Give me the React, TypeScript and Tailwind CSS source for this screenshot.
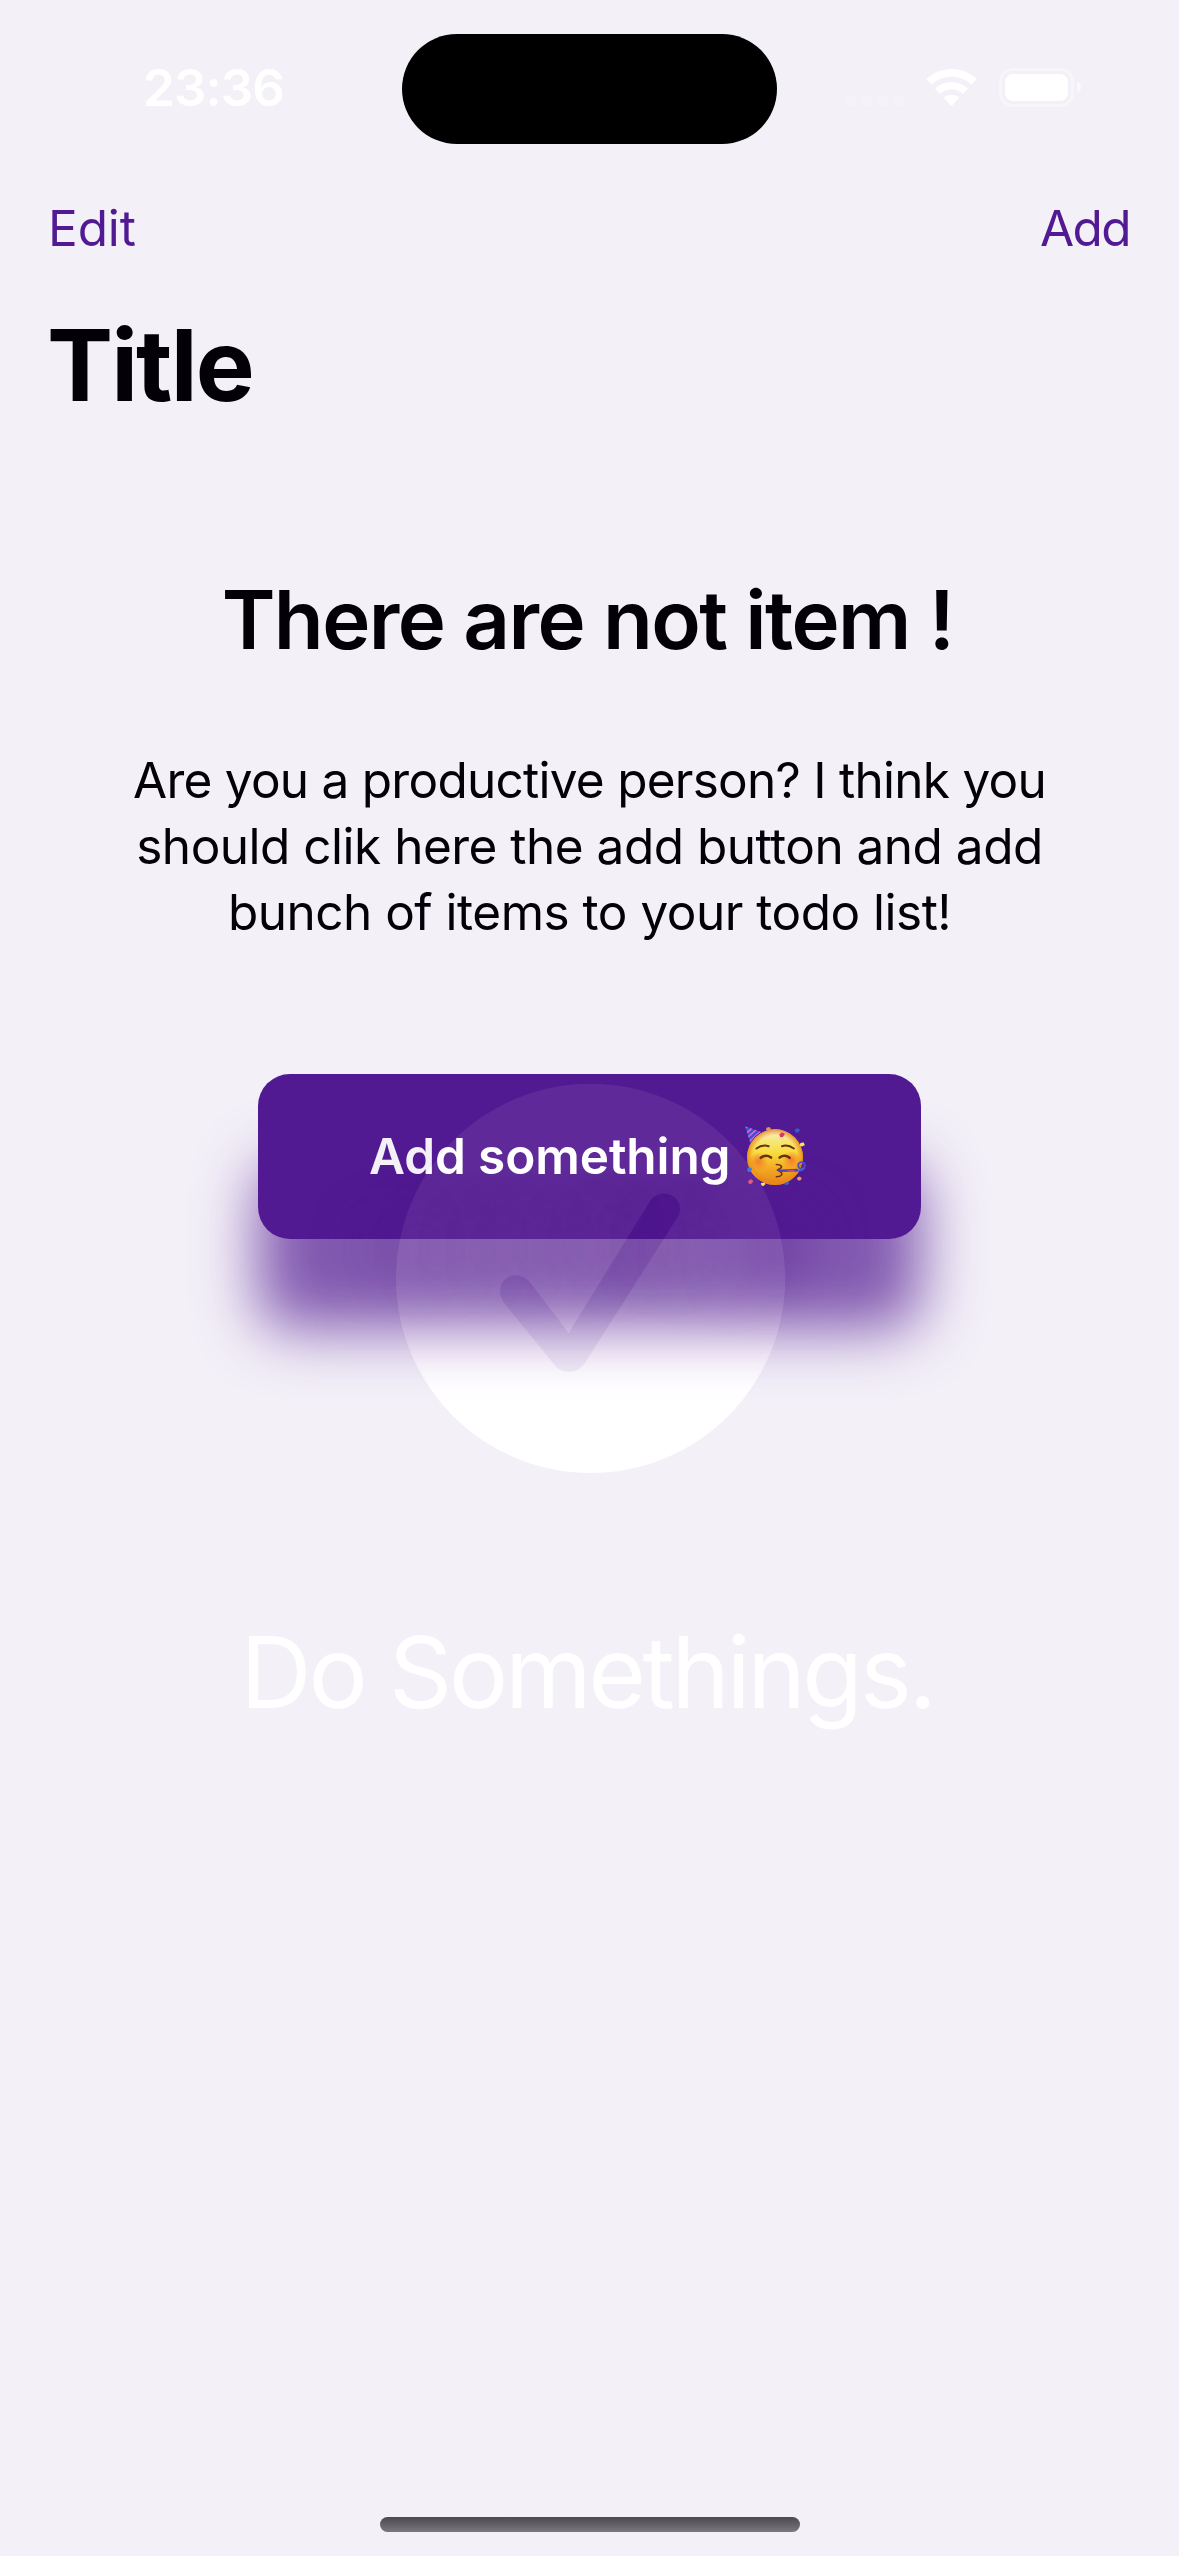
import React from "react";

function PartyFace() {
  return (
    <svg viewBox="75 74 192 190" className="h-[63px] w-16 shrink-0 drop-shadow-[0_90px_30px_rgba(82,26,146,0.7)]">
      <defs>
        <linearGradient id="face" x1="0" y1="0" x2="0" y2="1">
          <stop offset="0" stopColor="#f8efd9" />
          <stop offset="0.2" stopColor="#f7e77c" />
          <stop offset="0.42" stopColor="#f8dc3e" />
          <stop offset="0.68" stopColor="#f4ac26" />
          <stop offset="1" stopColor="#e5841a" />
        </linearGradient>
        <radialGradient id="rim">
          <stop offset="0.78" stopColor="#e98716" stopOpacity="0" />
          <stop offset="1" stopColor="#e98716" stopOpacity="0.85" />
        </radialGradient>
        <radialGradient id="cheek">
          <stop offset="0" stopColor="#f4722a" stopOpacity="0.85" />
          <stop offset="1" stopColor="#f4722a" stopOpacity="0" />
        </radialGradient>
        <clipPath id="hat">
          <path d="M78 78 L126 95 Q103 107 94 130 Z" />
        </clipPath>
      </defs>
      <circle cx="168" cy="171" r="84" fill="url(#face)" />
      <circle cx="168" cy="171" r="84" fill="url(#rim)" />
      <circle cx="118" cy="184" r="28" fill="url(#cheek)" />
      <circle cx="218" cy="180" r="28" fill="url(#cheek)" />
      <g clipPath="url(#hat)">
        <rect x="74" y="74" width="56" height="60" fill="#2f58d0" />
        <g stroke="#e35fd6" strokeWidth="5">
          <path d="M74 86 L90 74" />
          <path d="M80 101 L104 78" />
          <path d="M84 113 L116 84" />
          <path d="M87 127 L128 90" />
        </g>
      </g>
      <g fill="none" stroke="#66330a" strokeWidth="6" strokeLinecap="round">
        <path d="M112 145 Q129 132 149 138" />
        <path d="M189 138 Q207 132 225 145" />
        <path d="M125 173 Q140 161 156 172" strokeWidth="8" />
        <path d="M182 172 Q198 161 212 173" strokeWidth="8" />
        <path d="M172 193 C187 193 193 201 182 206 L176 210 L184 215 C194 222 187 230 172 230" strokeWidth="4.5" />
      </g>
      <path d="M175 209 L236 206 L238 214 L180 216 Z" fill="#4e43b4" />
      <path d="M205 212 L226 211" stroke="#d0568c" strokeWidth="3" />
      <circle cx="248" cy="196" r="10" fill="none" stroke="#4a50c0" strokeWidth="5.5" />
      <circle cx="248" cy="196" r="3" fill="#4a50c0" />
      <path d="M257 203 Q250 213 236 211" fill="none" stroke="#4a62d2" strokeWidth="5" />
      <path d="M142 82 l10 -2 4 7 -7 5 -8 -3z" fill="#e8944c" />
      <path d="M181 103 l8 -7 9 5 -6 9 -8 1z" fill="#dc3563" />
      <path d="M227 89 l7 -5 9 3 -3 9 -9 1z" fill="#315fc4" />
      <path d="M244 129 l10 -3 4 9 -10 4 -5 -3z" fill="#f3e564" />
      <path d="M84 207 l6 -7 9 7 -5 9 -8 -1z" fill="#2f6cd4" />
      <path d="M87 244 l8 -7 8 7 -7 8 -7 -1z" fill="#e0476e" />
      <path d="M125 249 l12 -1 2 5 -7 6 -5 -3z" fill="#f3e564" />
      <path d="M197 249 l9 -4 6 4 -7 6 -8 -1z" fill="#2f6cc4" />
      <path d="M235 232 l8 -3 6 6 -6 7 -8 -3z" fill="#ec9a58" />
    </svg>
  );
}

function StatusBar() {
  return (
    <header className="flex h-[177px] items-start text-white">
      <div className="w-[402px] pt-[55px] pl-[143px] text-[51px] leading-[66px] font-semibold tracking-[-0.9px]">23:36</div>
      <div className="mt-[34px] h-[110px] w-[375px] rounded-full bg-black" />
      <svg viewBox="0 0 300 60" className="mt-[60px] ml-[43px] h-[60px] w-[300px]">
        <g fill="#fff" fillOpacity="0.3">
          <circle cx="31" cy="41" r="5.3" />
          <circle cx="47" cy="41" r="5.3" />
          <circle cx="63" cy="41" r="5.3" />
          <circle cx="79" cy="41" r="5.3" />
        </g>
        <g fill="#fff">
          <path d="M106.300 19.300C120.500 5.700 142.500 5.700 156.700 19.300L151.500 24.500C140.400 14.200 122.600 14.200 111.500 24.500Z" />
          <path d="M115 28.500C124.500 19.700 138.500 19.700 148 28.500L142.700 34C136.300 27.800 126.700 27.800 120.300 34Z" />
          <path d="M123.800 37.500C128.300 33.700 134.700 33.700 139.200 37.500L131.500 46.200Z" />
          <rect x="185" y="14" width="63" height="27" rx="8" />
        </g>
        <rect x="180.500" y="9.500" width="72" height="36" rx="12" fill="none" stroke="#fff" strokeOpacity="0.4" strokeWidth="3" />
        <path d="M257 21.500C260 22.500 261 25 261 27.500C261 30 260 32.500 257 33.500Z" fill="#fff" fillOpacity="0.5" />
      </svg>
    </header>
  );
}

/* Launch artwork fading out: adds light to whatever lies underneath. */
function LaunchOverlay() {
  return (
    <div className="pointer-events-none absolute inset-0 flex flex-col items-center pt-[1083px] mix-blend-plus-lighter">
      <svg viewBox="394 1083 391 391" className="size-[391px] overflow-visible">
        <path
          fill="#0d0f08"
          fillRule="evenodd"
          d="M396 1278.400A194.600 194.600 0 1 1 785.200 1278.400A194.600 194.600 0 1 1 396 1278.400Z M568.700 1333L530.500 1283C526 1277.500 521 1275.500 515.500 1275.500C507 1275.500 500 1282 500 1291C500 1295 501.500 1299.500 505 1304L553 1363C558 1369 562 1371.700 569 1371.700C575 1371.700 581 1369 585.500 1362L676 1219.500C679 1215 680 1212 680 1209C680 1200 673 1193.700 664 1193.700C658 1193.700 653 1196 649.500 1202Z"
        />
      </svg>
      <p className="mt-[138px] pr-[5px] text-[99px] leading-[120px] tracking-[-3.4px] text-[#0d0f08]">Do Somethings.</p>
    </div>
  );
}

export default function App() {
  return (
    <div className="relative isolate flex h-[2556px] w-[1179px] flex-col overflow-hidden bg-[#f3f0f8] font-['Inter',sans-serif] text-[#040008]">
      <StatusBar />
      <nav className="flex h-[102px] items-center justify-between pr-[49px] pl-12 text-[49.5px] text-[#521a92]">
        <button className="tracking-[-0.1px]">Edit</button>
        <button className="tracking-[-1.6px]">Add</button>
      </nav>
      <h1 className="pl-[47px] text-[99px] leading-[172px] font-bold tracking-[-1.9px]">Title</h1>

      <main className="flex flex-1 flex-col items-center pt-[119px] text-center">
        <h2 className="pr-[4px] text-[81.5px] leading-[99px] font-semibold tracking-[-1.6px] whitespace-nowrap">There are not item !</h2>
        <p className="mt-[78px] text-[49.5px] leading-[66px] tracking-[-0.5px] whitespace-nowrap">
          <span className="tracking-[-0.74px]">Are you a productive person? I think you</span>
          <br />
          should clik here the add button and add
          <br />
          bunch of items to your todo list!
        </p>
        <button className="mt-[129px] flex h-[165px] w-[663px] items-center rounded-[32px] bg-[#521a92] pl-[111px] text-[49.5px] font-semibold tracking-[-0.1px] whitespace-nowrap text-[#f3f0f8] shadow-[0_90px_60px_rgba(82,26,146,0.7)]">
          <span className="w-[375px] text-left [text-shadow:0_90px_60px_rgba(82,26,146,0.7)]">Add something</span>
          <PartyFace />
        </button>
      </main>

      <LaunchOverlay />
      <div className="mx-auto mb-6 h-[15px] w-[420px] shrink-0 rounded-full bg-linear-to-b from-[#4c4a4d] to-[#7b787e]" />
    </div>
  );
}
